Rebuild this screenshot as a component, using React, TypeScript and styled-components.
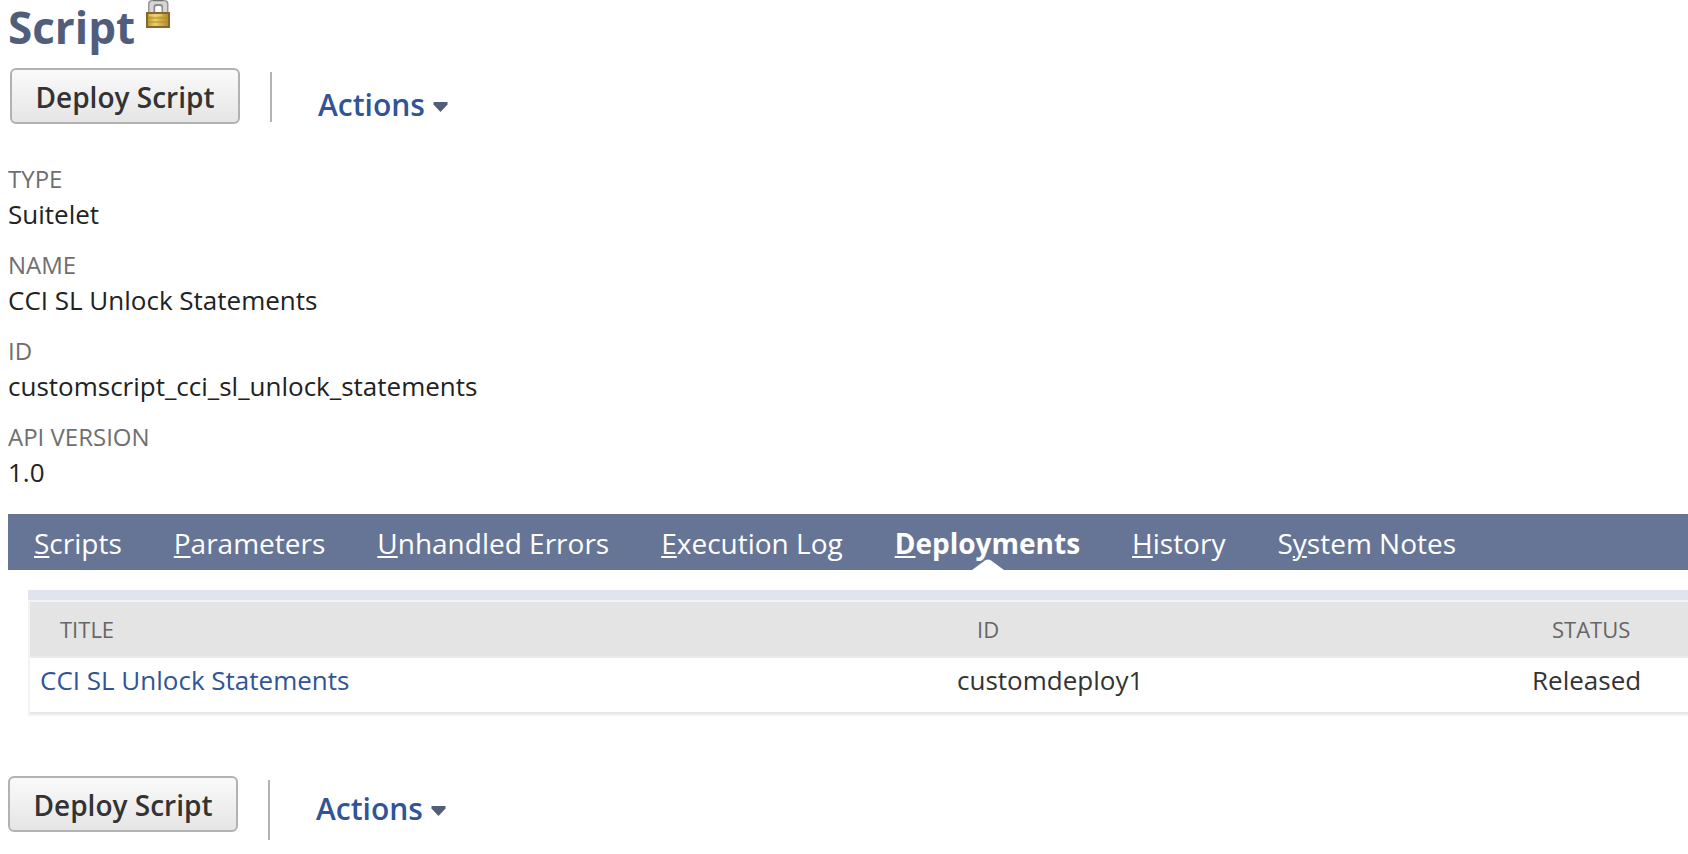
import React from "react";
import styled, { createGlobalStyle } from "styled-components";

const GlobalStyle = createGlobalStyle`
  *, *::before, *::after { box-sizing: border-box; }
  html, body { margin: 0; padding: 0; background: #fff; overflow: hidden; }
  body { font-family: "Open Sans", "Noto Sans", sans-serif; }
`;

const Page = styled.main`
  width: 100%;
  height: 854px;
  padding-left: 8px;
  overflow: hidden;
  color: #222;
`;

const TitleBar = styled.header`
  display: flex;
  align-items: flex-start;
  height: 68px;
`;

const Title = styled.h1`
  margin: 0;
  width: 136px;
  font-size: 44px;
  font-weight: 700;
  line-height: 54px;
  color: #515e7b;
`;

const Lock = styled.svg`
  display: block;
  margin-left: 1px;
`;

const Toolbar = styled.div<{ $indent?: number; $height: number }>`
  display: flex;
  align-items: flex-start;
  height: ${(p) => p.$height}px;
  padding-left: ${(p) => p.$indent ?? 0}px;
`;

const Button = styled.button`
  width: 230px;
  height: 56px;
  padding: 2px 0 0;
  border: 2px solid #b2b2b2;
  border-radius: 6px;
  background: linear-gradient(to bottom, #fafafa 0%, #e5e5e5 100%);
  font-family: inherit;
  font-size: 28px;
  font-weight: 600;
  line-height: 50px;
  color: #333;
  white-space: nowrap;
`;

const Divider = styled.span<{ $height: number }>`
  width: 2px;
  height: ${(p) => p.$height}px;
  margin: 4px 46px 0 30px;
  background: #b3b3b3;
`;

const Menu = styled.a<{ $top: number }>`
  display: flex;
  align-items: center;
  margin-top: ${(p) => p.$top}px;
  font-size: 30px;
  font-weight: 600;
  line-height: 40px;
  color: #315497;
`;

const Caret = styled.svg`
  display: block;
  margin: 4px 0 0 8px;
`;

const Fields = styled.dl`
  margin: 0;
  height: 352px;
`;

const Field = styled.div`
  height: 86px;
`;

const Label = styled.dt`
  font-size: 24px;
  line-height: 34px;
  color: #6f6f6f;
`;

const Value = styled.dd`
  margin: 0;
  font-size: 26px;
  line-height: 36px;
  color: #222;
`;

const TabBar = styled.nav`
  display: flex;
  height: 56px;
  background: #667596;
`;

const Tab = styled.a<{ $active?: boolean }>`
  position: relative;
  padding: 0 26px;
  font-size: 28px;
  font-weight: ${(p) => (p.$active ? 700 : 400)};
  line-height: 58px;
  color: #fff;
  white-space: nowrap;
`;

const Key = styled.span`
  text-decoration: underline;
  text-decoration-thickness: 2px;
  text-underline-offset: 2px;
`;

const Pointer = styled.svg`
  position: absolute;
  left: 50%;
  bottom: 0;
  margin-left: -15px;
`;

const Sublist = styled.section`
  margin: 20px 0 0 20px;
  height: 186px;
`;

const Strip = styled.div`
  height: 10px;
  background: #e0e4ed;
`;

const Table = styled.div`
  border: solid #f3f3f3;
  border-width: 2px 0 2px 2px;
`;

const Row = styled.div<{ $head?: boolean }>`
  display: grid;
  grid-template-columns: 917px 575px 1fr;
  height: 56px;
  border-bottom: 2px solid ${(p) => (p.$head ? "#ebebeb" : "#e6e6e6")};
  background: ${(p) => (p.$head ? "#e4e4e4" : "#fff")};
`;

const HeadCell = styled.span`
  padding-left: 30px;
  font-size: 22px;
  line-height: 55px;
  color: #666;
`;

const Cell = styled.span<{ $link?: boolean }>`
  padding-left: 10px;
  font-size: 26px;
  line-height: 44px;
  color: ${(p) => (p.$link ? "#315497" : "#333")};
`;

const fields = [
  { label: "TYPE", value: "Suitelet" },
  { label: "NAME", value: "CCI SL Unlock Statements" },
  { label: "ID", value: "customscript_cci_sl_unlock_statements" },
  { label: "API VERSION", value: "1.0" },
];

const tabs = [
  { before: "", key: "S", after: "cripts" },
  { before: "", key: "P", after: "arameters" },
  { before: "", key: "U", after: "nhandled Errors" },
  { before: "", key: "E", after: "xecution Log" },
  { before: "", key: "D", after: "eployments", active: true },
  { before: "", key: "H", after: "istory" },
  { before: "S", key: "y", after: "stem Notes" },
];

function LockIcon() {
  return (
    <Lock width="26" height="28" viewBox="0 0 26 28" aria-label="Locked">
      <defs>
        <linearGradient id="brass" x1="0" x2="1" y1="0" y2="0">
          <stop offset="0" stopColor="#c09a38" />
          <stop offset="0.35" stopColor="#ead163" />
          <stop offset="1" stopColor="#b58c2a" />
        </linearGradient>
      </defs>
      <path d="M3 13V4Q3 0 7 0H19.500Q23.500 0 23.500 4V13Z" fill="#979797" />
      <path d="M4.500 13V5Q4.500 1 8.500 1H18Q22 1 22 5V13Z" fill="#d6d6d6" />
      <path d="M8.500 13V7Q8.500 4 11 4H15.500Q18 4 18 7V13Z" fill="#8c8c8c" />
      <path d="M10.200 12V7.500Q10.200 6 11.700 6H15Q16.500 6 16.500 7.500V12Z" fill="#fff" />
      <path d="M8 0.500H18.500" stroke="#747474" strokeWidth="1.500" />
      <rect x="1" y="12" width="24" height="16" fill="#87672b" />
      <rect x="3" y="14" width="20" height="12" fill="url(#brass)" />
      <path d="M3 18H23M3 22H23" stroke="#b18b33" strokeWidth="1.200" />
      <path d="M4 15H17" stroke="#f0d982" strokeWidth="1" />
    </Lock>
  );
}

function Actions({ top }: { top: number }) {
  return (
    <Menu $top={top}>
      Actions
      <Caret width="15" height="10" viewBox="0 0 15 10">
        <path d="M0.500 0H14.500V2.500L7.500 10L0.500 2.500Z" fill="#515e7b" />
      </Caret>
    </Menu>
  );
}

export default function App() {
  return (
    <>
      <GlobalStyle />
      <Page>
        <TitleBar>
          <Title>Script</Title>
          <LockIcon />
        </TitleBar>
        <Toolbar $indent={2} $height={94}>
          <Button>Deploy Script</Button>
          <Divider $height={50} />
          <Actions top={17} />
        </Toolbar>
        <Fields>
          {fields.map((f) => (
            <Field key={f.label}>
              <Label>{f.label}</Label>
              <Value>{f.value}</Value>
            </Field>
          ))}
        </Fields>
        <TabBar>
          {tabs.map((t) => (
            <Tab key={t.after} $active={t.active}>
              {t.before}
              <Key>{t.key}</Key>
              {t.after}
              {t.active && (
                <Pointer width="32" height="11" viewBox="0 0 32 11">
                  <path d="M0 11L13 1.500Q16 -0.500 19 1.500L32 11Z" fill="#fff" />
                </Pointer>
              )}
            </Tab>
          ))}
        </TabBar>
        <Sublist>
          <Strip />
          <Table>
            <Row $head>
              <HeadCell>TITLE</HeadCell>
              <HeadCell>ID</HeadCell>
              <HeadCell>STATUS</HeadCell>
            </Row>
            <Row>
              <Cell $link>CCI SL Unlock Statements</Cell>
              <Cell>customdeploy1</Cell>
              <Cell>Released</Cell>
            </Row>
          </Table>
        </Sublist>
        <Toolbar $height={78}>
          <Button>Deploy Script</Button>
          <Divider $height={60} />
          <Actions top={13} />
        </Toolbar>
      </Page>
    </>
  );
}
